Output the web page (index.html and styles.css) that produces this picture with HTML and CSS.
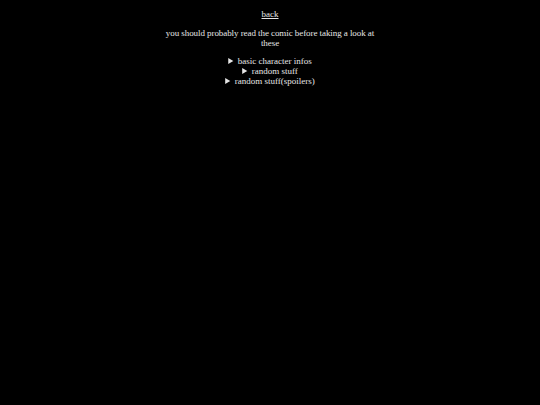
FILE: index.html
```html
<!DOCTYPE html>
<html lang="en">
<head>
    <meta charset="UTF-8">
    <meta name="viewport" content="width=device-width, initial-scale=1.0">
    <title>extras</title>
    <link rel="stylesheet" href="styles.css">
</head>
<body>
    <div class="page">
        <a class="back" href="#">back</a>
        <p class="note">you should probably read the comic before taking a look at these</p>

        <div class="sections">
            <details>
                <summary>basic character infos</summary>
            </details>
            <details>
                <summary>random stuff</summary>
            </details>
            <details>
                <summary>random stuff(spoilers)</summary>
            </details>
        </div>
    </div>
</body>
</html>
```

FILE: styles.css
```css
body {
    margin: 0;
    padding: 0;
    background: #000;
    color: #e6e6e6;
    font-family: 'Liberation Serif', 'Times New Roman', serif;
    font-size: 9px;
    min-height: 100vh;
}

.page {
    width: 216px;
    margin: 0 auto;
    padding-top: 9px;
    text-align: center;
}

.back {
    color: #e6e6e6;
}

.note {
    margin: 9px 0 8px;
    letter-spacing: -0.07px;
}

summary {
    cursor: pointer;
}
```
